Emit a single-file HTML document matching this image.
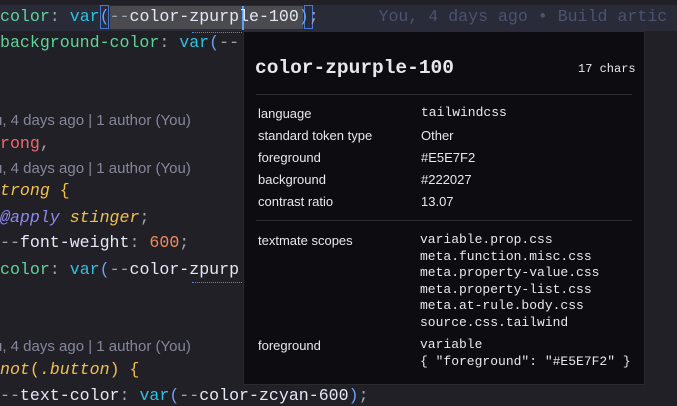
<!DOCTYPE html><html><head><style>
body{margin:0;width:677px;height:406px;background:#222027;overflow:hidden;position:relative;font-family:"Liberation Mono",monospace}
.c{position:absolute;left:0;font-size:16.6px;white-space:pre;color:#e5e7f2;line-height:20px}
.b{position:absolute;left:-6px;font-family:"Liberation Sans",sans-serif;font-size:15px;color:#858799;white-space:pre;line-height:18px}
.g{color:#5ed49a}.cy{color:#2cc3e0}.p{color:#6aa0f0}.r{color:#f2666a}.y{color:#f2c14a;font-style:italic}.y2{color:#f2c14a}.o{color:#f28a5a}.pu{color:#8d88f0;font-style:italic}.gr{color:#a0a2b0}
#pop{position:absolute;left:243px;top:31px;width:402px;height:354px;background:#0d0c10;border:1px solid #2a2a30;box-sizing:border-box}
.l{position:absolute;font-family:"Liberation Sans",sans-serif;font-size:13px;color:#e8e8ec;line-height:16px}
.v{position:absolute;font-size:13px;color:#e8e8ec;line-height:16.6px;white-space:pre}
.hr{position:absolute;left:12px;right:12px;height:1px;background:#2e2e34}
</style></head><body>
<div style="position:absolute;left:0;top:5px;width:677px;height:26px;background:#2a2b38"></div>
<div style="position:absolute;left:110px;top:6px;width:193px;height:23px;background:#4a4a4f"></div>
<div style="position:absolute;left:100px;top:5px;width:9px;height:24px;border:1px solid #4a7ad0;box-sizing:border-box"></div>
<div style="position:absolute;left:304px;top:5px;width:9px;height:24px;border:1px solid #4a7ad0;box-sizing:border-box"></div>
<div style="position:absolute;left:242px;top:6px;width:2px;height:24px;background:#5aa0ff"></div>
<div class="c" style="top:7px"><span class="g">color</span><span class="gr">:</span> <span class="cy">var</span><span class="p">(</span><span class="gr">--</span>color-zpurple-100<span class="p">)</span><span class="gr">;</span>      <span style="color:#4c5270">You, 4 days ago • Build artic</span></div>
<div style="position:absolute;left:192px;top:29px;width:70px;height:3px;border-bottom:1px dotted #4a8ae0"></div>
<div class="c" style="top:33px"><span class="g">background-color</span><span class="gr">:</span> <span class="cy">var</span><span class="p">(</span><span class="gr">--</span></div>
<div class="b" style="top:112px">u, 4 days ago | 1 author (You)</div>
<div class="c" style="top:134px"><span class="r">rong</span><span class="gr">,</span></div>
<div class="b" style="top:160px">u, 4 days ago | 1 author (You)</div>
<div class="c" style="top:181px"><span class="y">trong</span> <span class="y2">{</span></div>
<div class="c" style="top:208px"><span class="pu">@apply</span> <span class="y">stinger</span><span class="gr">;</span></div>
<div class="c" style="top:233px"><span class="gr">--</span>font-weight<span class="gr">:</span> <span class="o">600</span><span class="gr">;</span></div>
<div class="c" style="top:260px"><span class="g">color</span><span class="gr">:</span> <span class="cy">var</span><span class="p">(</span><span class="gr">--</span>color-zpurp</div>
<div style="position:absolute;left:192px;top:279px;width:52px;height:3px;border-bottom:1px dotted #4a8ae0"></div>
<div class="b" style="top:338px">u, 4 days ago | 1 author (You)</div>
<div class="c" style="top:360px"><span class="y">not</span><span class="y2">(</span><span class="y">.button</span><span class="y2">)</span> <span class="y2">{</span></div>
<div class="c" style="top:386px"><span class="gr">--</span>text-color<span class="gr">:</span> <span class="cy">var</span><span class="p">(</span><span class="gr">--</span>color-zcyan-600<span class="p">)</span><span class="gr">;</span></div>
<div id="pop">
<div class="v" style="left:11px;top:24px;font-size:19.5px;line-height:24px;color:#e8e8ec;font-weight:bold">color-zpurple-100</div>
<div class="v" style="left:334px;top:29px;font-size:12px">17 chars</div>
<div class="hr" style="top:62px"></div>
<div class="l" style="left:14px;top:74px">language</div><div class="v" style="left:177px;top:73px">tailwindcss</div>
<div class="l" style="left:14px;top:96px">standard token type</div><div class="l" style="left:177px;top:96px">Other</div>
<div class="l" style="left:14px;top:118px">foreground</div><div class="l" style="left:177px;top:118px">#E5E7F2</div>
<div class="l" style="left:14px;top:140px">background</div><div class="l" style="left:177px;top:140px">#222027</div>
<div class="l" style="left:14px;top:162px">contrast ratio</div><div class="l" style="left:177px;top:162px">13.07</div>
<div class="hr" style="top:188px"></div>
<div class="l" style="left:14px;top:201px">textmate scopes</div>
<div class="v" style="left:176px;top:200px">variable.prop.css
meta.function.misc.css
meta.property-value.css
meta.property-list.css
meta.at-rule.body.css
source.css.tailwind</div>
<div class="l" style="left:14px;top:306px">foreground</div>
<div class="v" style="left:176px;top:305px">variable
{ "foreground": "#E5E7F2" }</div>
</div>
</body></html>
